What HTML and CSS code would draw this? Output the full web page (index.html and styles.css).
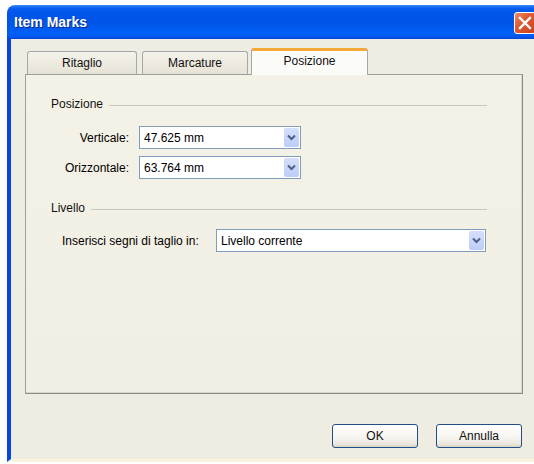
FILE: index.html
```html
<!DOCTYPE html>
<html lang="it">
<head>
<meta charset="utf-8">
<title>Item Marks</title>
<link rel="stylesheet" href="styles.css">
</head>
<body>
<div class="window">
  <div class="titlebar">
    <span class="title">Item Marks</span>
    <span class="close" aria-label="Chiudi">
      <svg width="14" height="14" viewBox="0 0 14 14"><path d="M2 2 L12 12 M12 2 L2 12" stroke="#fff" stroke-width="2.4" stroke-linecap="square" fill="none"/></svg>
    </span>
  </div>
  <div class="client">
    <div class="tabs">
      <div class="tab tab-first">Ritaglio</div>
      <div class="tab tab-second">Marcature</div>
      <div class="tab active">Posizione</div>
    </div>
    <div class="panel">
      <div class="group-head"><span>Posizione</span><span class="rule"></span></div>
      <div class="fields">
        <label class="field-label">Verticale:</label>
        <div class="combo">
          <span class="value">47.625 mm</span>
          <span class="arrow"><svg width="9" height="7" viewBox="0 0 9 7"><path d="M1 1.5 L4.5 5 L8 1.5" stroke="#4d6185" stroke-width="2" fill="none"/></svg></span>
        </div>
        <label class="field-label">Orizzontale:</label>
        <div class="combo">
          <span class="value">63.764 mm</span>
          <span class="arrow"><svg width="9" height="7" viewBox="0 0 9 7"><path d="M1 1.5 L4.5 5 L8 1.5" stroke="#4d6185" stroke-width="2" fill="none"/></svg></span>
        </div>
      </div>
      <div class="group-head group-second"><span>Livello</span><span class="rule"></span></div>
      <div class="field-row">
        <label class="row-label">Inserisci segni di taglio in:</label>
        <div class="combo combo-wide">
          <span class="value">Livello corrente</span>
          <span class="arrow"><svg width="9" height="7" viewBox="0 0 9 7"><path d="M1 1.5 L4.5 5 L8 1.5" stroke="#4d6185" stroke-width="2" fill="none"/></svg></span>
        </div>
      </div>
    </div>
    <div class="actions">
      <button class="btn">OK</button>
      <button class="btn">Annulla</button>
    </div>
  </div>
</div>
</body>
</html>
```
FILE: styles.css
```css
html, body {
  margin: 0;
  padding: 0;
  background: #ffffff;
  overflow: hidden;
}

body {
  font-family: "Liberation Sans", Arial, sans-serif;
  font-size: 12px;
  color: #000;
}

.window {
  margin: 5px 0 0 7px;
  width: 534px;
}

/* Luna-style caption bar */
.titlebar {
  height: 34px;
  box-sizing: border-box;
  border-radius: 8px 8px 0 0;
  background: linear-gradient(#3c8cf8 0, #0a5ef0 3px, #0055ea 8px, #0054e6 50%, #0060f6 85%, #0558f0 92%, #0046d8 100%);
  display: flex;
  align-items: center;
  justify-content: space-between;
  padding: 0 5px 0 7px;
}

.title {
  color: #fff;
  font-weight: bold;
  font-size: 14px;
  text-shadow: 1px 1px 0 #0a2a8a;
  margin-top: 0px;
}

.close {
  width: 22px;
  height: 22px;
  box-sizing: border-box;
  border: 1px solid #ffffff;
  border-radius: 3px;
  background: linear-gradient(135deg, #f08a68 0, #e05a32 40%, #c8401c 100%);
  display: flex;
  align-items: center;
  justify-content: center;
  margin-top: 1px;
}

/* dialog body with the blue frame at the side */
.client {
  background: #efece1;
  border-left: 4px solid #0b45e0;
  border-right: 4px solid #0b45e0;
  height: 423px;
  box-sizing: border-box;
  padding: 9px 14px 0 14px;
  border-bottom: 3px solid #f8f3df;
}

.tabs {
  display: flex;
  align-items: flex-end;
  height: 26px;
  padding-left: 2px;
  position: relative;
  z-index: 1;
}

.tab {
  height: 23px;
  box-sizing: border-box;
  border: 1px solid #a3a9a6;
  border-bottom: none;
  border-radius: 3px 3px 0 0;
  background: linear-gradient(#f4f2ea, #e6e2d6);
  display: flex;
  align-items: center;
  justify-content: center;
  color: #111;
}

.tab-first {
  width: 110px;
  margin-right: 5px;
}

.tab-second {
  width: 106px;
  margin-right: 3px;
}

.tab.active {
  width: 117px;
  height: 27px;
  margin-bottom: -1px;
  background: #fbfbf8;
  border-top: 3px solid #f4a838;
  border-color: #f4a838 #a3a9a6 #a3a9a6 #a3a9a6;
  padding-bottom: 4px;
}

.panel {
  height: 320px;
  box-sizing: border-box;
  border: 1px solid #9c9f9a;
  border-right-color: #8a8c86;
  border-bottom-color: #8a8c86;
  background: linear-gradient(#f4f1e7, #f1eee4);
  padding: 22px 35px 0 25px;
  box-shadow: inset -1px -1px 0 #d8d5ca;
}

.group-head {
  display: flex;
  align-items: center;
  line-height: 14px;
  color: #111;
}

.rule {
  flex: 1;
  height: 0;
  border-top: 1px solid #c9c7bb;
  margin: 3px 0 0 6px;
}

.fields {
  display: grid;
  grid-template-columns: 67px 162px;
  column-gap: 10px;
  row-gap: 7px;
  align-items: center;
  margin: 15px 0 0 11px;
}

.field-label {
  text-align: right;
  white-space: nowrap;
}

.combo {
  height: 23px;
  box-sizing: border-box;
  border: 1px solid #7f9db9;
  background: #fff;
  display: flex;
  align-items: center;
}

.value {
  flex: 1;
  padding-left: 4px;
}

.arrow {
  width: 15px;
  height: 19px;
  margin-right: 1px;
  border-radius: 2px;
  background: linear-gradient(#d5dffb, #bccdf7);
  display: flex;
  align-items: center;
  justify-content: center;
}

.group-second {
  margin-top: 22px;
}

.field-row {
  display: flex;
  align-items: center;
  margin: 14px 0 0 11px;
}

.row-label {
  width: 154px;
  white-space: nowrap;
}

.combo-wide {
  width: 270px;
}

.actions {
  display: flex;
  justify-content: flex-end;
  gap: 18px;
  margin: 30px 1px 0 0;
}

.btn {
  width: 86px;
  height: 24px;
  box-sizing: border-box;
  border: 1px solid #1f4f84;
  border-radius: 3px;
  background: linear-gradient(#ffffff 0, #f7f6f1 50%, #ebe8df 85%, #d8d3c6 100%);
  font-family: "Liberation Sans", Arial, sans-serif;
  font-size: 12px;
  color: #111;
  padding: 0;
}
```
